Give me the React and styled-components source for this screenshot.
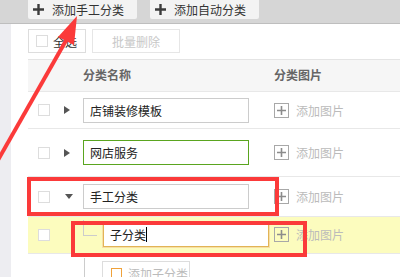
import React from 'react';
import styled, { createGlobalStyle } from 'styled-components';

const GlobalStyle = createGlobalStyle`
    body {
        margin: 0;
        background: #ffffff;
        font-family: "Noto Sans CJK SC", "Noto Sans", sans-serif;
        font-size: 12px;
        color: #333333;
    }
`;

const Page = styled.div`
    position: relative;
    width: 400px;
    height: 277px;
    overflow: hidden;
    background: #ffffff;
`;

const TopBar = styled.div`
    display: flex;
    align-items: flex-start;
    gap: 13px;
    height: 23px;
    padding-left: 28px;
    background: #d6d6d6;
    border-bottom: 1px solid #bebebe;
`;

const TopButton = styled.div`
    display: flex;
    align-items: center;
    gap: 8px;
    width: 109px;
    height: 19px;
    padding-left: 5px;
    box-sizing: border-box;
    background: #f3f3f3;
    border-radius: 0 0 2px 2px;
    color: #333333;
    font-size: 12px;
`;

const Body = styled.div`
    display: flex;
    height: 253px;
`;

const Sidebar = styled.div`
    width: 11px;
    flex-shrink: 0;
    background: #ededf1;
`;

const Main = styled.div`
    flex: 1;
    margin-left: 17px;
    display: flex;
    flex-direction: column;
`;

const Toolbar = styled.div`
    display: flex;
    gap: 6px;
    height: 37px;
    padding-top: 5px;
    box-sizing: border-box;
    border-bottom: 1px solid #e4e4e4;
`;

const ToolButton = styled.div`
    display: flex;
    align-items: center;
    justify-content: ${p => (p.$center ? 'center' : 'flex-start')};
    gap: 5px;
    width: ${p => p.$w}px;
    height: 24px;
    padding-left: ${p => (p.$center ? 0 : 7)}px;
    box-sizing: border-box;
    border: 1px solid ${p => (p.$disabled ? '#e6e6e6' : '#dddddd')};
    color: ${p => (p.$disabled ? '#c8c8c8' : '#333333')};
    background: #ffffff;
`;

const Check = styled.span`
    display: inline-block;
    width: 12px;
    height: 12px;
    box-sizing: border-box;
    border: 1px solid #dddddd;
    background: #ffffff;
`;

const Grid = styled.div`
    display: grid;
    grid-template-columns: 55px 191px 1fr;
    align-items: center;
    height: ${p => p.$h}px;
    box-sizing: border-box;
    background: ${p => p.$bg || '#ffffff'};
    border-bottom: 1px solid #e8e8e8;
`;

const HeadCell = styled.div`
    color: #666666;
    font-weight: bold;
    font-size: 12px;
    padding-bottom: 2px;
`;

const FirstCell = styled.div`
    display: flex;
    align-items: center;
    padding-left: 10px;
    gap: 14px;
`;

const Caret = styled.span`
    width: 0;
    height: 0;
    border-style: solid;
    ${p =>
        p.$open
            ? 'border-width: 5px 4px 0 4px; border-color: #555 transparent transparent transparent; margin-left: 1px;'
            : 'border-width: 4px 0 4px 6px; border-color: transparent transparent transparent #555;'}
`;

const NameCell = styled.div`
    display: flex;
    align-items: center;
`;

const Elbow = styled.span`
    width: 13px;
    height: 15px;
    margin: 0 6px 13px 0;
    border-left: 1px solid #cccccc;
    border-bottom: 1px solid #cccccc;
`;

const NameInput = styled.div`
    display: flex;
    align-items: center;
    width: 166px;
    height: 25px;
    padding-left: 6px;
    box-sizing: border-box;
    border: 1px solid ${p => p.$border || '#cccccc'};
    box-shadow: ${p => (p.$focus ? '0 0 0 1px #f6dfa6' : 'none')};
    background: #ffffff;
    color: #222222;
    font-size: 12px;
`;

const TextCaret = styled.span`
    display: inline-block;
    width: 1px;
    height: 15px;
    background: #000000;
`;

const AddPic = styled.div`
    display: flex;
    align-items: center;
    gap: 7px;
    color: #bbbbbb;
    font-size: 12px;
`;

const PlusBox = styled.span`
    display: flex;
    align-items: center;
    justify-content: center;
    width: 15px;
    height: 15px;
    box-sizing: border-box;
    border: 1px solid #a8a8a8;
`;

const SubRow = styled.div`
    display: flex;
    align-items: flex-start;
    height: 19px;
    padding-left: 56px;
    padding-top: 4px;
`;

const TreeLine = styled.span`
    width: 1px;
    height: 20px;
    background: #cccccc;
    margin-right: 17px;
`;

const AddSubButton = styled.div`
    display: flex;
    align-items: center;
    gap: 6px;
    width: 88px;
    height: 24px;
    margin-top: 3px;
    padding-left: 8px;
    box-sizing: border-box;
    border: 1px solid #dddddd;
    color: #bbbbbb;
`;

const OrangeSquare = styled.span`
    width: 9px;
    height: 9px;
    border: 1px solid #f0a23a;
`;

const RedBox = styled.div`
    position: absolute;
    left: ${p => p.$x}px;
    top: ${p => p.$y}px;
    width: ${p => p.$w}px;
    height: ${p => p.$h}px;
    box-sizing: border-box;
    border: 4px solid #fb3a3a;
    pointer-events: none;
`;

const Overlay = styled.svg`
    position: absolute;
    left: 0;
    top: 0;
    pointer-events: none;
`;

const BoldPlus = () => (
    <svg width="11" height="11" viewBox="0 0 11 11">
        <path d="M5.5 0v11M0 5.5h11" stroke="#3c3c3c" strokeWidth="2.4" />
    </svg>
);

const ThinPlus = () => (
    <svg width="11" height="11" viewBox="0 0 11 11">
        <path d="M5.5 1v9M1 5.5h9" stroke="#8c8c8c" strokeWidth="1.6" />
    </svg>
);

const rows = [
    { name: '店铺装修模板', h: 38 },
    { name: '网店服务', h: 49, border: '#5aa51f' },
    { name: '手工分类', h: 40, open: true }
];

const App = () => (
    <>
        <GlobalStyle />
        <Page>
            <TopBar>
                <TopButton>
                    <BoldPlus />
                    添加手工分类
                </TopButton>
                <TopButton>
                    <BoldPlus />
                    添加自动分类
                </TopButton>
            </TopBar>
            <Body>
                <Sidebar />
                <Main>
                    <Toolbar>
                        <ToolButton $w={58}>
                            <Check />
                            全选
                        </ToolButton>
                        <ToolButton $w={88} $center $disabled>
                            批量删除
                        </ToolButton>
                    </Toolbar>
                    <Grid $h={32} $bg="#f6f6f6">
                        <span />
                        <HeadCell>分类名称</HeadCell>
                        <HeadCell>分类图片</HeadCell>
                    </Grid>
                    {rows.map(r => (
                        <Grid key={r.name} $h={r.h}>
                            <FirstCell>
                                <Check />
                                <Caret $open={r.open} />
                            </FirstCell>
                            <NameCell>
                                <NameInput $border={r.border}>{r.name}</NameInput>
                            </NameCell>
                            <AddPic>
                                <PlusBox>
                                    <ThinPlus />
                                </PlusBox>
                                添加图片
                            </AddPic>
                        </Grid>
                    ))}
                    <Grid $h={38} $bg="#fcfcbe">
                        <FirstCell>
                            <Check />
                        </FirstCell>
                        <NameCell>
                            <Elbow />
                            <NameInput $border="#e2b455" $focus>
                                子分类
                                <TextCaret />
                            </NameInput>
                        </NameCell>
                        <AddPic>
                            <PlusBox>
                                <ThinPlus />
                            </PlusBox>
                            添加图片
                        </AddPic>
                    </Grid>
                    <SubRow>
                        <TreeLine />
                        <AddSubButton>
                            <OrangeSquare />
                            添加子分类
                        </AddSubButton>
                    </SubRow>
                </Main>
            </Body>
            <RedBox $x={27} $y={177} $w={252} $h={39} />
            <RedBox $x={71} $y={221} $w={236} $h={36} />
            <Overlay width="400" height="277" viewBox="0 0 400 277">
                <path d="M68 37L-2 160" stroke="#fb3a3a" strokeWidth="4" />
                <polygon points="77,16 58,37 74,45" fill="#fb3a3a" />
            </Overlay>
        </Page>
    </>
);

export default App;
